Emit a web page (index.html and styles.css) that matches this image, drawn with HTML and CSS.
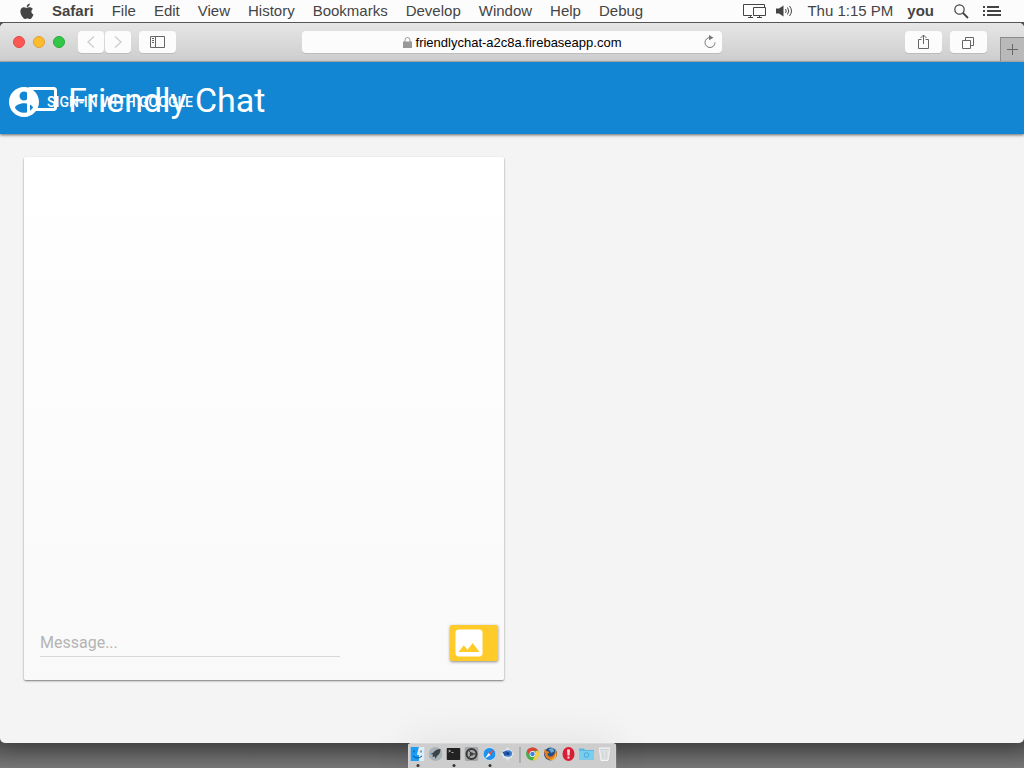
FILE: index.html
```html
<!DOCTYPE html>
<html lang="en">
<head>
<meta charset="utf-8">
<meta name="viewport" content="width=device-width, initial-scale=1">
<title>Friendly Chat</title>
<link rel="stylesheet" href="styles.css">
</head>
<body>
<div class="desktop">
  <div class="menubar">
    <svg class="apple" viewBox="0 0 14 16" width="14" height="17" aria-label="Apple"><path fill="#444" d="M9.800 0c.1 1-.3 1.900-.9 2.600C8.300 3.300 7.500 3.700 6.700 3.700 6.600 2.800 7 1.900 7.500 1.300 8.100.600 9 .1 9.800 0zM12.900 5.400C12 6 11.400 6.900 11.400 8c0 1.400.8 2.400 2.100 2.900-.3 1-.9 2.100-1.600 3-.6.9-1.200 1.600-2.100 1.600-.9 0-1.300-.5-2.400-.5s-1.500.5-2.400.5c-.9 0-1.500-.8-2.200-1.700C1.300 11.900.400 9.700.400 7.900c0-2.700 1.700-4.100 3.400-4.100 1 0 1.900.6 2.700.6.700 0 1.700-.7 3-.7 1.300 0 2.500.500 3.400 1.700z"/></svg>
    <nav class="menus">
      <a href="#" class="app-name">Safari</a><a href="#">File</a><a href="#">Edit</a><a href="#">View</a><a href="#">History</a><a href="#">Bookmarks</a><a href="#">Develop</a><a href="#">Window</a><a href="#">Help</a><a href="#">Debug</a>
    </nav>
    <div class="status">
      <svg width="24" height="16" viewBox="0 0 24 16" fill="none" stroke="#444"><path d="M9 12.500H.500V1.500H21.500V4M10.500 4.500H22.500V12.500H10.500zM5 14.500H10M7.500 12.500v2M14 14.500H19M16.500 12.500v2"/></svg>
      <svg class="volume" width="18" height="14" viewBox="0 0 18 14"><path fill="#444" d="M1 4.500h3L8.500 1.500v11L4 9.500H1z"/><path fill="none" stroke="#444" d="M10.500 5q1.500 2 0 4M12.500 3.500q2.500 3.500 0 7M14.500 2q4 5 0 10"/></svg>
      <span class="clock">Thu 1:15 PM</span>
      <span class="user">you</span>
      <svg class="search-icon" width="15" height="15" viewBox="0 0 15 15" fill="none" stroke="#444"><circle cx="5.500" cy="5.500" r="4.700" stroke-width="1.200"/><path stroke-width="1.800" d="M9 9l5 5"/></svg>
      <svg width="18" height="12" viewBox="0 0 18 12" fill="#444"><path d="M0 1h2v2H0zM4 1h12v2H4zM0 5h2v2H0zM4 5h14v2H4zM0 9h2v2H0zM4 9h14v2H4z"/></svg>
    </div>
  </div>
  <div class="window">
    <div class="toolbar">
      <div class="tools">
        <div class="lights"><button class="light close" aria-label="Close"></button><button class="light minimize" aria-label="Minimize"></button><button class="light expand" aria-label="Zoom"></button></div>
        <div class="history">
          <button class="tool narrow" aria-label="Back"><svg width="8" height="12" viewBox="0 0 8 12" fill="none" stroke="#ccc" stroke-width="1.300"><path d="M7 .500L1 6l6 5.500"/></svg></button>
          <button class="tool narrow" aria-label="Forward"><svg width="8" height="12" viewBox="0 0 8 12" fill="none" stroke="#ccc" stroke-width="1.300"><path d="M1 .500L7 6l-6 5.500"/></svg></button>
        </div>
        <button class="tool" aria-label="Sidebar"><svg width="15" height="12" viewBox="0 0 15 12" fill="none" stroke="#666"><path d="M.500.500h14v11H.500zM5.500.500v11M2 2.500h2M2 4.500h2M2 6.500h2"/></svg></button>
      </div>
      <div class="address">
        <svg width="9" height="11" viewBox="0 0 9 11"><path fill="none" stroke="#999" d="M2 5V3a2.500 2.500 0 0 1 5 0v2"/><path fill="#999" d="M0 4.500h9V11H0z"/></svg>
        <span>friendlychat-a2c8a.firebaseapp.com</span>
        <button class="reload" aria-label="Reload"><svg width="13" height="14" viewBox="0 0 13 14"><path fill="none" stroke="#777" d="M7 2.500a5 5 0 1 0 5 5"/><path fill="#777" d="M6 0l4.500 2.800L6 5.300z"/></svg></button>
      </div>
      <div class="tools right">
        <button class="tool" aria-label="Share"><svg width="13" height="16" viewBox="0 0 13 16" fill="none" stroke="#666"><path d="M4.500 5.500H1.500v9h10v-9h-3M6.500 10V1M3.500 4l3-3 3 3"/></svg></button>
        <button class="tool" aria-label="Tabs"><svg width="13" height="13" viewBox="0 0 13 13" fill="none" stroke="#666"><path d="M.500 4.500h8v8h-8zM3.500 4V1.500h8v8H9"/></svg></button>
        <button class="new-tab" aria-label="New tab"><svg width="11" height="11" viewBox="0 0 11 11" stroke="#666"><path d="M0 5.500h11M5.500 0v11"/></svg></button>
      </div>
    </div>
    <header class="header">
      <h1 class="title"><svg width="36" height="36" viewBox="0 0 24 24" fill="#fff"><path d="M20 2H4c-1.100 0-2 .9-2 2v18l4-4h14c1.100 0 2-.9 2-2V4c0-1.100-.9-2-2-2zm0 14H6l-2 2V4h16v12z"/></svg>Friendly Chat</h1>
      <button class="sign-in"><svg width="36" height="36" viewBox="0 0 24 24" fill="#fff"><path d="M12 2C6.480 2 2 6.480 2 12s4.480 10 10 10 10-4.480 10-10S17.520 2 12 2zm0 3c1.660 0 3 1.340 3 3s-1.340 3-3 3-3-1.340-3-3 1.340-3 3-3zm0 14.200c-2.500 0-4.710-1.280-6-3.220.030-1.990 4-3.080 6-3.080 1.990 0 5.970 1.090 6 3.080-1.290 1.940-3.500 3.220-6 3.220z"/></svg>Sign-in with Google</button>
    </header>
    <main class="main">
      <section class="card">
        <form class="composer">
          <input class="message" type="text" placeholder="Message..." aria-label="Message">
          <button class="image-button" type="button" aria-label="Add image"><svg width="36" height="36" viewBox="0 0 24 24" fill="#fff"><path d="M21 19V5c0-1.100-.9-2-2-2H5c-1.100 0-2 .9-2 2v14c0 1.100.9 2 2 2h14c1.100 0 2-.9 2-2zM8.500 13.500l2.500 3.010L14.500 12l4.500 6H5l3.500-4.500z"/></svg></button>
        </form>
      </section>
    </main>
  </div>
  <div class="dock">
    <span class="dock-item running"><svg width="14" height="14" viewBox="0 0 14 14"><path fill="#1b9cf5" d="M0 0h8.500L6.500 8h2v6H0z"/><path fill="#dcecf8" d="M8.500 0H14v14H8.500V8h-2z"/><path d="M3.500 3.500v2M10.500 3.500v2M2.500 9q4.500 4 9 0" fill="none" stroke="#174c7c"/></svg></span>
    <span class="dock-item"><svg width="14" height="14" viewBox="0 0 14 14"><circle cx="7" cy="7" r="7" fill="#a9b2b7"/><path fill="#3c444b" d="M12 2Q7 2 5 5.500L2 7l2.500.5L4 10l2.500-.5.500 2.500L8.500 9Q12 7 12 2z"/></svg></span>
    <span class="dock-item running"><svg width="14" height="14" viewBox="0 0 14 14"><rect y="1" width="14" height="12" rx="1" fill="#222"/><path d="M2 3l2 1-2 1M5 5.500h2" fill="none" stroke="#ddd" stroke-width=".7"/></svg></span>
    <span class="dock-item"><svg width="14" height="14" viewBox="0 0 14 14"><rect width="14" height="14" rx="2" fill="#a2a7a9"/><circle cx="7" cy="7" r="5" fill="#a8a8a8" stroke="#383838" stroke-width="2"/><circle cx="7" cy="7" r="1.800" fill="#444"/><path stroke="#333" d="M7 7h4M7 7L4.500 3.500M7 7l-2.500 3.500"/></svg></span>
    <span class="dock-item running"><svg width="14" height="14" viewBox="0 0 14 14"><circle cx="7" cy="7" r="6.500" fill="#1f91ee" stroke="#cfe0ec"/><path fill="#f04b3c" d="M11.500 2.500L8 8 6 6z"/><path fill="#fff" d="M2.500 11.500L6 6l2 2z"/></svg></span>
    <span class="dock-item"><svg width="14" height="14" viewBox="0 0 14 14"><path fill="#dde4ea" d="M7 0l2.500 3h2v2L14 7l-2.500 2v2h-2L7 14l-2.500-3h-2V9L0 7l2.500-2V3h2z"/><ellipse cx="7.500" cy="6.500" rx="4" ry="3.200" fill="#3d7fd0"/><path fill="#2458a8" d="M2 5l4-1 2 3-4 2z"/><circle cx="7.500" cy="6.500" r="1.500" fill="#173c80"/></svg></span>
    <span class="dock-rule"></span>
    <span class="dock-item"><svg width="14" height="14" viewBox="0 0 14 14"><circle cx="7" cy="7" r="6.500" fill="#48ad4c"/><path fill="#df4238" d="M1.400 3.700A6.500 6.500 0 0 1 12.600 3.700H7L4 8.500z"/><path fill="#f8cf3c" d="M12.600 3.700A6.500 6.500 0 0 1 7 13.500L10 8V4z"/><circle cx="7" cy="7" r="3" fill="#fff"/><circle cx="7" cy="7" r="2.300" fill="#4383df"/></svg></span>
    <span class="dock-item"><svg width="14" height="14" viewBox="0 0 14 14"><circle cx="7" cy="7" r="6.500" fill="#234f89"/><path fill="#68a9d1" d="M5 2l4-1 2 3-3 2z"/><path fill="#e87a19" d="M1 2l2 2 3 1-2 2q1 4 5 2l2-2 1-5q3 5 0 9-5 4-9 0-3-4-2-9z"/><path fill="#f8c23c" d="M11 10l1-4q2 3-1 6-2 2-5 1 3 0 5-3z"/></svg></span>
    <span class="dock-item"><svg width="14" height="14" viewBox="0 0 14 14"><ellipse cx="7" cy="7" rx="6" ry="7" fill="#d81e35"/><path fill="#f3dcdc" d="M5.500 2.500h3L8 8.500H6zM6 9.500h2v2H6z"/></svg></span>
    <span class="dock-item"><svg width="16" height="14" viewBox="0 0 16 14"><path fill="#58b9e5" d="M.500 1.500h5l1 1.500h9v9.500H.500z"/><path fill="#79cef0" d="M.500 4h15v8.500H.500z"/><circle cx="8" cy="8" r="2.300" fill="none" stroke="#45a8d5"/></svg></span>
    <span class="dock-item"><svg width="12" height="14" viewBox="0 0 12 14"><path fill="#dfe2e4" stroke="#f4f4f4" d="M.700 1h10.600L9.500 13.500h-7z"/><path fill="none" stroke="#cfd3d5" d="M1 2.500h10M4 4l.5 8M8 4l-.5 8"/></svg></span>
  </div>
</div>
</body>
</html>
```
FILE: styles.css
```css
* { box-sizing: border-box; }
body { margin: 0; font-family: "Liberation Sans", Arial, sans-serif; }
button { border: 0; padding: 0; font: inherit; }
svg { display: block; flex: none; }

.desktop {
  position: relative;
  display: flex;
  flex-direction: column;
  min-height: 100vh;
  padding-bottom: 25px;
  overflow: hidden;
  background: linear-gradient(#555 calc(100% - 25px), #777);
}
.menubar {
  position: relative;
  z-index: 1;
  display: flex;
  align-items: center;
  height: 23px;
  padding: 0 23px 0 20px;
  background: #fcfcfc;
  border-bottom: 1px solid #555;
  color: #444;
  font-size: 15px;
  line-height: 22px;
}
.apple { margin-right: 18px; }
.menus { display: flex; gap: 18px; }
.menus a { color: inherit; text-decoration: none; }
.app-name, .user { font-weight: bold; }
.status { display: flex; align-items: center; gap: 14px; margin-left: auto; }
.volume { margin-left: -6px; }
.search-icon { margin-left: 6px; }

.window {
  flex: 1;
  display: flex;
  flex-direction: column;
  background: #f4f4f4;
  border-radius: 5px;
  overflow: hidden;
  box-shadow: 0 4px 24px rgba(0, 0, 0, .3);
}
.toolbar {
  display: grid;
  grid-template-columns: 1fr 41% 1fr;
  height: 39px;
  background: linear-gradient(#e6e6e6, #cdcdcd);
  border-bottom: 1px solid #b5b5b5;
}
.tools { display: flex; align-items: center; gap: 8px; padding-left: 13px; }
.lights { display: flex; gap: 8px; margin-right: 5px; }
.light { width: 12px; height: 12px; border-radius: 50%; border: 1px solid; }
.close { background: #fc5753; border-color: #df4744; }
.minimize { background: #fdbc2e; border-color: #dea034; }
.expand { background: #33c748; border-color: #27aa35; }
.history { display: flex; gap: 1px; }
.tool, .address {
  display: flex;
  align-items: center;
  justify-content: center;
  height: 22px;
  border-radius: 4px;
  background: #fcfcfc;
  box-shadow: 0 1px 0 #bcbcbc;
}
.tool { width: 37px; }
.narrow { width: 26px; }
.address { position: relative; align-self: center; gap: 4px; font-size: 13px; color: #000; }
.reload { position: absolute; right: 6px; background: none; }
.right { justify-content: flex-end; padding: 0; }
.new-tab {
  display: flex;
  align-items: center;
  justify-content: center;
  align-self: flex-end;
  width: 24px;
  height: 24px;
  margin-left: 5px;
  background: #b9b9b9;
  border: 1px solid #8c8c8c;
  border-width: 1px 0 0 1px;
}

.header {
  position: relative;
  display: flex;
  align-items: center;
  height: 72px;
  padding: 8px 24px 0;
  background: #1386d3;
  color: #fff;
  font-family: Roboto, sans-serif;
  box-shadow: 0 1px 3px rgba(0, 0, 0, .6);
}
.title {
  display: flex;
  align-items: center;
  gap: 8px;
  margin: 0;
  font-size: 34px;
  line-height: 36px;
  padding-bottom: 4px;
  font-weight: 400;
}
.title svg { margin-bottom: -4px; }
.sign-in {
  position: absolute;
  left: 6px;
  top: 22px;
  display: flex;
  align-items: center;
  gap: 5px;
  background: none;
  color: #fff;
  font-size: 14px;
  font-weight: 500;
  text-transform: uppercase;
}
.main { flex: 1; padding: 23px 24px 63px; display: flex; }
.card {
  display: flex;
  flex-direction: column;
  justify-content: flex-end;
  width: 480px;
  padding: 0 6px 19px 16px;
  border-radius: 2px;
  background: linear-gradient(#fff, #f9f9f9);
  box-shadow: 0 1px 2px rgba(0, 0, 0, .5);
}
.composer { display: flex; align-items: center; justify-content: space-between; }
.message {
  width: 300px;
  height: 28px;
  padding: 0;
  border: 0;
  border-bottom: 1px solid #d8d8d8;
  background: none;
  font-family: Roboto, sans-serif;
  font-size: 16px;
  outline: 0;
}
.message::placeholder { color: #b4b4b4; opacity: 1; }
.image-button {
  width: 48px;
  height: 36px;
  padding-left: 1px;
  border-radius: 2px;
  background: #ffcb2b;
  box-shadow: 0 1px 3px rgba(0, 0, 0, .45);
}

.dock {
  position: absolute;
  bottom: 0;
  left: 50%;
  transform: translateX(-50%);
  display: flex;
  gap: 4px;
  height: 25px;
  padding: 3px 4px 0 2px;
  background: #cdcdcd;
  border: 1px solid #d8d8d8;
  border-bottom: 0;
  border-radius: 4px 4px 0 0;
  box-shadow: 0 0 40px rgba(0, 0, 0, .1);
}
.dock-item { display: flex; flex-direction: column; align-items: center; width: 14px; }
.running::after { content: ""; width: 3px; height: 3px; margin-top: 3px; border-radius: 50%; background: #333; }
.dock-rule { width: 1px; height: 16px; margin: 0 1px; background: #929292; }
```
